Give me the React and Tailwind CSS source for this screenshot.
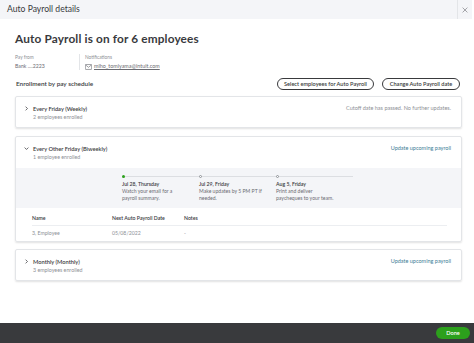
import React from "react";

const steps = [
  { date: "Jul 28, Thursday", text: ["Watch your email for a", "payroll summary."], active: true },
  { date: "Jul 29, Friday", text: ["Make updates by 5 PM PT if", "needed."], active: false },
  { date: "Aug 5, Friday", text: ["Print and deliver", "paycheques to your team."], active: false },
];

function Chevron({ open }) {
  return (
    <svg viewBox="0 0 8 8" className="w-[5px] h-[5px] text-[#393a3d]" fill="none" stroke="currentColor" strokeWidth="1.2">
      {open ? <path d="M1 2.5 L4 5.5 L7 2.5" /> : <path d="M2.5 1 L5.5 4 L2.5 7" />}
    </svg>
  );
}

function ScheduleHead({ open, title, sub, right, link }) {
  return (
    <div className="flex items-start pl-[8px] pr-[10px] pt-[8px]">
      <div className="w-[9px] h-[7px] flex items-center">
        <Chevron open={open} />
      </div>
      <div className="flex flex-col">
        <span className="text-[5.7px] font-semibold leading-[7px] text-[#393a3d]">{title}</span>
        <span className="text-[5.3px] leading-[7px] mt-[2px] text-[#8d9096]">{sub}</span>
      </div>
      <span className={"ml-auto text-[5.5px] leading-[7px] " + (link ? "text-[#3d7d96]" : "text-[#8d9096]")}>{right}</span>
    </div>
  );
}

export default function App() {
  return (
    <div className="w-[474px] h-[343px] flex flex-col bg-white overflow-hidden text-[#393a3d]" style={{ fontFamily: "Lato, 'Open Sans', sans-serif" }}>
      <header className="h-[19px] w-[472px] bg-[#f4f5f8] flex items-center pl-[7px] shrink-0">
        <span className="text-[8.6px] text-[#393a3d]">Auto Payroll details</span>
        <div className="ml-auto h-full border-l border-[#e3e5e8] w-[15px] flex items-center justify-center">
          <svg viewBox="0 0 10 10" className="w-[6px] h-[6px]" stroke="#6b6c72" strokeWidth="1">
            <path d="M1 1 L9 9 M9 1 L1 9" />
          </svg>
        </div>
      </header>

      <main className="flex-1 pl-[15px] pr-[12px]">
        <h1 className="mt-[13px] text-[11.8px] font-bold leading-[13px] tracking-[0.15px]">Auto Payroll is on for 6 employees</h1>

        <div className="flex mt-[9px]">
          <div className="w-[65px] border-r border-[#e3e5e8] flex flex-col">
            <span className="text-[4.8px] leading-[6px] text-[#8d9096]">Pay from</span>
            <span className="text-[5.2px] leading-[7px] mt-[3px] text-[#6b6c72]">Bank ....2223</span>
          </div>
          <div className="pl-[5px] flex flex-col">
            <span className="text-[4.8px] leading-[6px] text-[#8d9096]">Notifications</span>
            <div className="flex items-center gap-[2px] mt-[3px]">
              <svg viewBox="0 0 10 8" className="w-[7px] h-[6px]" fill="none" stroke="#6b6c72" strokeWidth="0.9">
                <rect x="0.5" y="0.5" width="9" height="7" rx="0.8" />
                <path d="M0.8 1 L5 4.5 L9.2 1" />
              </svg>
              <span className="text-[5.4px] leading-[7px] underline text-[#6b6c72]">miho_tomiyama@intuit.com</span>
            </div>
          </div>
        </div>

        <div className="flex items-center mt-[8px] pr-[2px]">
          <span className="ml-[1px] text-[6.4px] font-semibold">Enrollment by pay schedule</span>
          <div className="ml-auto flex gap-[8px]">
            <button className="h-[12px] w-[97px] rounded-full border border-[#393a3d] text-[5.6px] font-semibold">Select employees for Auto Payroll</button>
            <button className="h-[12px] w-[78px] rounded-full border border-[#393a3d] text-[5.6px] font-semibold">Change Auto Payroll date</button>
          </div>
        </div>

        <section className="mt-[6px] h-[32px] rounded-[2px] border border-[#e3e5e8] shadow-[0_1px_2px_rgba(0,0,0,0.12)]">
          <ScheduleHead title="Every Friday (Weekly)" sub="2 employees enrolled" right="Cutoff date has passed. No further updates." />
        </section>

        <section className="mt-[8px] h-[106px] rounded-[2px] border border-[#e3e5e8] shadow-[0_1px_2px_rgba(0,0,0,0.12)] flex flex-col">
          <ScheduleHead open title="Every Other Friday (Biweekly)" sub="1 employee enrolled" right="Update upcoming payroll" link />
          <div className="mt-[7px] h-[40px] bg-[#f4f5f8] flex pl-[106px] pt-[6px]">
            {steps.map((s) => (
              <div key={s.date} className="w-[77px] flex flex-col">
                <div className="flex items-center h-[4px]">
                  <span className={"w-[3px] h-[3px] rounded-full shrink-0 " + (s.active ? "bg-[#2ca01c]" : "border-[0.5px] border-[#8d9096] bg-white")} />
                  <span className="flex-1 h-px bg-[#dcdee2]" />
                </div>
                <span className="mt-[3px] text-[5.2px] font-semibold leading-[7px]">{s.date}</span>
                {s.text.map((t) => (
                  <span key={t} className="text-[5.1px] leading-[7px] text-[#6b6c72]">{t}</span>
                ))}
              </div>
            ))}
          </div>
          <div className="mx-[16px] mr-[14px] mt-[7px]">
            <div className="grid grid-cols-[80px_72px_1fr] text-[5.2px] font-semibold leading-[7px] pb-[3px] border-b border-[#eceef1]">
              <span>Name</span>
              <span>Next Auto Payroll Date</span>
              <span>Notes</span>
            </div>
            <div className="grid grid-cols-[80px_72px_1fr] text-[5.2px] leading-[7px] pt-[4px] text-[#8d9096]">
              <span>3, Employee</span>
              <span>05/08/2022</span>
              <span>-</span>
            </div>
          </div>
        </section>

        <section className="mt-[7px] h-[32px] rounded-[2px] border border-[#e3e5e8] shadow-[0_1px_2px_rgba(0,0,0,0.12)]">
          <ScheduleHead title="Monthly (Monthly)" sub="3 employees enrolled" right="Update upcoming payroll" link />
        </section>
      </main>

      <footer className="h-[20px] shrink-0 bg-[#393a3d] flex items-center justify-end pr-[4px]">
        <button className="h-[12px] w-[34px] rounded-full bg-[#2ca01c] text-white text-[5.6px] font-semibold">Done</button>
      </footer>
    </div>
  );
}
